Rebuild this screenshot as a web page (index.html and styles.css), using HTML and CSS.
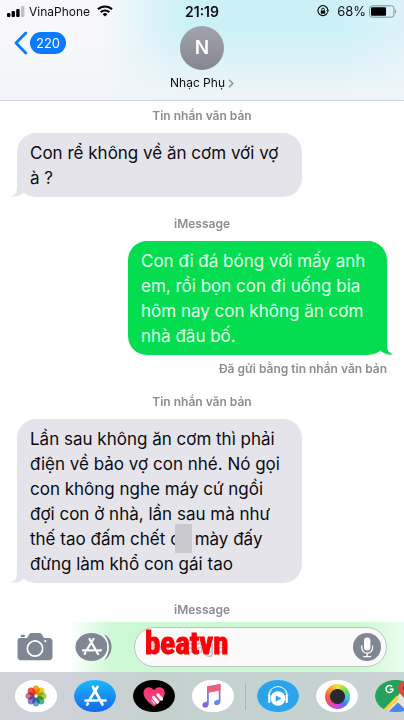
FILE: index.html
```html
<!DOCTYPE html>
<html lang="vi">
<head>
  <meta charset="UTF-8">
  <meta name="viewport" content="width=device-width, initial-scale=1.0">
  <title>Nhạc Phụ</title>
  <link rel="stylesheet" href="styles.css">
</head>
<body>
  <div class="phone">
    <header class="top">
      <div class="status">
        <div class="status-left">
          <svg width="18" height="11" viewBox="0 0 18 11">
            <rect x="0" y="7" width="3.4" height="4" rx="1"/>
            <rect x="4.6" y="5" width="3.4" height="6" rx="1"/>
            <rect x="9.2" y="3" width="3.4" height="8" rx="1"/>
            <rect x="14" y="0" width="3.4" height="11" rx="1" fill="#bfc0c2"/>
          </svg>
          <span>VinaPhone</span>
          <svg class="wifi" width="16" height="12" viewBox="0 0 16 12" fill="none" stroke="#000" stroke-width="2.1">
            <path d="M1 4.3a10 10 0 0 1 14 0"/>
            <path d="M3.7 7.2a6.2 6.2 0 0 1 8.6 0"/>
            <path d="M8 11.6L5.6 9.2a3.4 3.4 0 0 1 4.8 0z" fill="#000" stroke="none"/>
          </svg>
        </div>
        <time class="clock">21:19</time>
        <div class="status-right">
          <svg class="lock" width="12" height="12" viewBox="0 0 12 12" fill="none" stroke="#000">
            <path d="M10.6 7.4A5 5 0 1 1 10.9 5" stroke-width="1.1"/>
            <path d="M9.2 5.2h3L10.8 7.3z" fill="#000" stroke="none"/>
            <rect x="3.8" y="5.4" width="4.4" height="3.3" rx=".5" fill="#000" stroke="none"/>
            <path d="M4.7 5.6V4.4a1.3 1.3 0 0 1 2.6 0v1.2" stroke-width=".9"/>
          </svg>
          <span class="percent">68%</span>
          <svg width="28" height="13" viewBox="0 0 28 13">
            <rect x=".6" y=".8" width="24.4" height="11.4" rx="2.6" fill="none" stroke="#8b8f92"/>
            <rect x="2" y="2.3" width="15" height="8.4" rx="1"/>
            <path d="M26.2 4.5v4c1.4-.5 1.4-3.5 0-4z" fill="#8b8f92"/>
          </svg>
        </div>
      </div>
      <nav class="nav">
        <a class="back" href="#">
          <svg width="14" height="24" viewBox="0 0 14 24" fill="none" stroke="#0a7aff" stroke-width="2.8" stroke-linecap="round" stroke-linejoin="round">
            <path d="M11.8 2L2 12l9.800 10"/>
          </svg>
          <span class="unread">220</span>
        </a>
        <a class="contact" href="#">
          <span class="avatar">N</span>
          <span class="name">Nhạc Phụ
            <svg width="6" height="9" viewBox="0 0 6 9" fill="none" stroke="#7f8a90" stroke-width="1.2"><path d="M1 .8l3.800 3.700L1 8.200"/></svg>
          </span>
        </a>
      </nav>
    </header>

    <main class="messages">
      <p class="label">Tin nhắn văn bản</p>
      <div class="bubble received">
        Con rể không về ăn cơm với vợ à ?
        <svg class="tail" width="16" height="22" viewBox="0 0 16 22"><path d="M6 0v13c0 4-2 7-6 8.500 4 .5 8-.5 11-2.500L16 14z"/></svg>
      </div>
      <p class="label">iMessage</p>
      <div class="bubble sent">
        Con đi đá bóng với mấy anh em, rồi bọn con đi uống bia hôm nay con không ăn cơm nhà đâu bố.
        <svg class="tail" width="16" height="22" viewBox="0 0 16 22"><path d="M10 0v13c0 4 2 7 6 8.500-4 .5-8-.5-11-2.500L0 14z"/></svg>
      </div>
      <p class="sent-note">Đã gửi bằng tin nhắn văn bản</p>
      <p class="label">Tin nhắn văn bản</p>
      <div class="bubble received">
        Lần sau không ăn cơm thì phải điện về bảo vợ con nhé. Nó gọi con không nghe máy cứ ngồi đợi con ở nhà, lần sau mà như thế tao đấm chết <span class="masked">cụ</span> mày đấy đừng làm khổ con gái tao
        <svg class="tail" width="16" height="22" viewBox="0 0 16 22"><path d="M6 0v13c0 4-2 7-6 8.500 4 .5 8-.5 11-2.500L16 14z"/></svg>
      </div>
      <p class="label">iMessage</p>
    </main>

    <form class="compose">
      <button type="button" class="tool" aria-label="Camera">
        <svg width="36" height="28" viewBox="0 0 36 28">
          <path fill="#7f8794" d="M3 5h7l2-3.200C12.600.6 13.300 0 14.500 0h8c1.200 0 1.900.6 2.500 1.800L27 5h5c2.200 0 3.500 1.300 3.500 3.500v15.500c0 2-1.300 3.200-3.500 3.200H4c-2.200 0-3.500-1.200-3.500-3.200V8C.5 6.200 1.500 5 3 5z"/>
          <rect x="3.500" y="1.800" width="4.500" height="2.200" rx="1" fill="#7f8794"/>
          <circle cx="18" cy="15.500" r="7.700" fill="none" stroke="#fff" stroke-width="1.700"/>
          <circle cx="28.300" cy="8.200" r="1.100" fill="#fff"/>
        </svg>
      </button>
      <button type="button" class="tool" aria-label="App Store">
        <svg width="37" height="28" viewBox="0 0 37 28">
          <path d="M29 1.500c9.500 3 10.500 20.500 0 25.500 6.500-7 6.500-18 0-25.500z" fill="#7f8794"/>
          <ellipse cx="16.500" cy="14" rx="16" ry="14" fill="#7f8794"/>
          <path d="M27 1c8 6 8 20 0 26" fill="none" stroke="#fff" stroke-width="1.200"/>
          <g fill="none" stroke="#fff" stroke-width="2.300" stroke-linecap="round">
            <path d="M14.500 6l8.500 15M18.500 6L12 16.500M8 17.300h10.500M23 17.300h3M10.300 19.800l-.6 1"/>
          </g>
        </svg>
      </button>
      <div class="field">
        <input type="text" placeholder="iMessage" aria-label="iMessage">
        <button type="button" class="mic" aria-label="Ghi âm">
          <svg width="28" height="28" viewBox="0 0 28 28">
            <circle cx="14" cy="14" r="14" fill="#7f8794"/>
            <rect x="11" y="4.500" width="6.400" height="13" rx="3.200" fill="#fff"/>
            <path d="M8.800 12.500v2.300a5.400 5.400 0 0 0 10.800 0v-2.300M14.200 20.200v3.300M10.300 23.700h7.800" fill="none" stroke="#fff" stroke-width="1.300"/>
          </svg>
        </button>
        <span class="watermark">beatvn</span>
      </div>
    </form>

    <footer class="apps">
      <button class="app" aria-label="Photos">
        <svg viewBox="0 0 42 32">
          <rect width="42" height="32" fill="#fff"/>
          <g transform="translate(21 16)" class="petals">
            <ellipse cy="-6" rx="3.700" ry="4.600" fill="#fb9c1b"/>
            <ellipse cy="-6" rx="3.700" ry="4.600" fill="#e8cf1d" transform="rotate(45)"/>
            <ellipse cy="-6" rx="3.700" ry="4.600" fill="#a4c93c" transform="rotate(90)"/>
            <ellipse cy="-6" rx="3.700" ry="4.600" fill="#4cb385" transform="rotate(135)"/>
            <ellipse cy="-6" rx="3.700" ry="4.600" fill="#6a9fd8" transform="rotate(180)"/>
            <ellipse cy="-6" rx="3.700" ry="4.600" fill="#8a7fc4" transform="rotate(225)"/>
            <ellipse cy="-6" rx="3.700" ry="4.600" fill="#c8709f" transform="rotate(270)"/>
            <ellipse cy="-6" rx="3.700" ry="4.600" fill="#f0584a" transform="rotate(315)"/>
          </g>
        </svg>
      </button>
      <button class="app" aria-label="App Store">
        <svg viewBox="0 0 42 32">
          <defs><linearGradient id="store" x2="0" y2="1"><stop stop-color="#1cb8f8"/><stop offset="1" stop-color="#1468ee"/></linearGradient></defs>
          <rect width="42" height="32" fill="url(#store)"/>
          <path d="M19 7l9.500 17.500M23.500 7L15.500 20M11.500 20.500h12M28.500 20.500h3M13.800 23.500l-.6 1" fill="none" stroke="#fff" stroke-width="2.700" stroke-linecap="round"/>
        </svg>
      </button>
      <button class="app" aria-label="Digital Touch">
        <svg viewBox="0 0 42 32">
          <defs><linearGradient id="heart" x2="0" y2="1"><stop stop-color="#fb2f68"/><stop offset="1" stop-color="#f0508a"/></linearGradient></defs>
          <rect width="42" height="32"/>
          <path d="M21 26.500C15 22 10.500 18 10.500 12.800c0-6 7.500-7.800 10.500-2.600 3-5.200 10.800-3.400 10.800 2.600 0 5.200-4.800 9.200-10.800 13.700z" fill="url(#heart)"/>
          <path d="M20.500 17.500l4 4.500M25 15l3.500 4" stroke="#fff" stroke-width="3.200" stroke-linecap="round"/>
          <path d="M18.500 20l3.500 4" stroke="#fbb6cc" stroke-width="1.300"/>
        </svg>
      </button>
      <button class="app" aria-label="Music">
        <svg viewBox="0 0 42 32">
          <defs><linearGradient id="music" x1="1" y1="0" x2="0" y2="1"><stop stop-color="#f4506c"/><stop offset=".45" stop-color="#5b8df0"/><stop offset=".7" stop-color="#7b7df0"/><stop offset="1" stop-color="#8a4be0"/></linearGradient></defs>
          <rect width="42" height="32" fill="#fff"/>
          <path d="M15 6.500L28.500 4v17.500c0 4-6.500 5-6.500 1.500 0-2.700 3-3 4.800-3.600V10.500l-10 2V24c0 4.500-6.300 4.800-6.300 1.300 0-2.800 2.700-3.100 4.500-3.700z" fill="url(#music)"/>
          <path d="M15 6.500L28.500 4v6.200L15 12.900z" fill="#ec5f7e"/>
        </svg>
      </button>
      <span class="divider"></span>
      <button class="app" aria-label="Zing MP3">
        <svg viewBox="0 0 42 32">
          <rect width="42" height="32" fill="#2aa4ea"/>
          <path d="M12.500 14.500C13.500 4 28.500 4 29.500 14.500" fill="none" stroke="#fff" stroke-width="1"/>
          <path d="M11 16c1-4 2-6 4-7.500M31 16c-1-4-2-6-4-7.500" fill="none" stroke="#fff" stroke-width=".7"/>
          <rect x="11.200" y="14.500" width="2.200" height="8.500" rx="1" fill="#fff"/>
          <rect x="28.600" y="14.500" width="2.200" height="8.500" rx="1" fill="#fff"/>
          <circle cx="21" cy="18.500" r="7.300" fill="#fff"/>
          <path d="M18.700 15.200v6.600l5.600-3.300z" fill="#2aa4ea"/>
        </svg>
      </button>
      <button class="app" aria-label="Color">
        <span class="wheel"></span>
      </button>
      <button class="app" aria-label="Google Maps">
        <svg viewBox="0 0 42 32">
          <rect width="42" height="32" fill="#23a25b"/>
          <path d="M7 32L24 14.500 42 32z" fill="#e9e6e0"/>
          <path d="M6 32L22 15.500l3 2.500L11 32z" fill="#f7cf48"/>
          <path d="M13 32l10-9.500L33 32z" fill="#4a86ea"/>
          <path d="M24 14l18-12v30h-5L23 18z" fill="#e9e6e0"/>
          <path d="M30.500 22c0-5-7.500-8-7.500-14C23 4 26.500 1 30.500 1S38 4 38 8c0 6-7.500 9-7.500 14z" fill="#dd4b3e"/>
          <circle cx="30.500" cy="8" r="2.600" fill="#80261f"/>
          <path d="M17.200 6.800a3.500 3.500 0 1 0 .8 2.500h-3.400" fill="none" stroke="#fff" stroke-width="1.500"/>
        </svg>
      </button>
    </footer>
  </div>
</body>
</html>
```
FILE: styles.css
```css
* {
  box-sizing: border-box;
}

body {
  margin: 0;
  font-family: Inter, "Noto Sans", sans-serif;
  color: #0c0c12;
  background: #fff;
}

a {
  color: inherit;
  text-decoration: none;
}

button {
  padding: 0;
  border: none;
  background: none;
  font: inherit;
  cursor: pointer;
}

svg {
  display: block;
}

p {
  margin: 0;
}

.phone {
  display: flex;
  flex-direction: column;
  min-height: 100vh;
  overflow: hidden;
}

/* header */
.top {
  border-bottom: 1px solid #d3d7da;
  background:
    linear-gradient(to bottom, rgba(247, 248, 250, 0) 30%, #f1f5f9 100%),
    linear-gradient(to right, #f8f8fa 25%, #cbf1f7 46%, #cbf1f7 84%, #dcf3f8 100%);
}

.status {
  display: grid;
  grid-template-columns: 1fr auto 1fr;
  align-items: center;
  height: 22px;
  padding: 0 7px;
  font-size: 12px;
}

.status-left,
.status-right {
  display: flex;
  align-items: center;
  gap: 4px;
}

.status-right {
  justify-content: flex-end;
  gap: 3px;
}

.wifi {
  margin-left: 3px;
}

.lock {
  margin-right: 5px;
}

.percent {
  font-size: 13px;
}

.clock {
  font-size: 14px;
  font-weight: 600;
}

.nav {
  display: grid;
  grid-template-columns: 1fr auto 1fr;
  align-items: start;
  padding: 4px 14px 8px;
}

.back {
  display: flex;
  align-items: center;
  gap: 2px;
  padding-top: 5px;
}

.unread {
  padding: 0 6px;
  border-radius: 11px;
  background: #0a7aff;
  color: #fff;
  font-size: 13px;
  line-height: 22px;
}

.contact {
  display: flex;
  flex-direction: column;
  align-items: center;
  gap: 4px;
}

.avatar {
  width: 44px;
  border-radius: 50%;
  background: linear-gradient(#a2a3ad, #858690);
  color: #fff;
  font-size: 19px;
  font-weight: 600;
  line-height: 44px;
  text-align: center;
}

.name {
  display: flex;
  align-items: center;
  gap: 3px;
  font-size: 12px;
  line-height: 18px;
}

/* conversation */
.messages {
  display: flex;
  flex: 1;
  flex-direction: column;
  align-items: flex-start;
  padding: 6px 17px 3px;
}

.label,
.sent-note {
  color: #8c8c92;
  font-size: 12px;
  font-weight: 600;
  line-height: 18px;
}

.label {
  align-self: center;
}

.sent-note {
  align-self: flex-end;
  margin: 5px 0 15px;
}

.bubble {
  position: relative;
  padding: 8px 13px 6px;
  border-radius: 19px;
  font-size: 17px;
  line-height: 25px;
}

.received {
  max-width: 77%;
  margin: 8px 0 18px;
  background: #e5e4ea;
}

.sent {
  align-self: flex-end;
  max-width: 70%;
  margin-top: 8px;
  background: #04dd50;
  color: #e4ffe9;
}

.tail {
  position: absolute;
  bottom: 0;
}

.received .tail {
  left: -6px;
  fill: #e5e4ea;
}

.sent .tail {
  right: -6px;
  fill: #04dd50;
}

.masked {
  position: relative;
}

.masked::after {
  content: "";
  position: absolute;
  top: -5px;
  right: -2px;
  width: 17px;
  height: 29px;
  background: #c8c8cd;
}

/* message box */
.compose {
  display: flex;
  align-items: center;
  gap: 22px;
  padding: 5px 17px;
  background: linear-gradient(to right, #fff 17%, #ccf9d4 28%, #ccf9d4 88%, #e9fdee 100%);
}

.field {
  position: relative;
  display: flex;
  flex: 1;
  align-items: center;
  min-width: 0;
  height: 40px;
  padding: 0 5px 0 12px;
  border: 1px solid #bcc4bf;
  border-radius: 20px;
  background: #fafafa;
}

.field input {
  flex: 1;
  min-width: 0;
  padding: 0;
  border: none;
  outline: none;
  background: none;
  font: inherit;
  font-size: 17px;
}

.field input::placeholder {
  color: #c3c3c7;
}

.watermark {
  position: absolute;
  top: -4px;
  left: 10px;
  color: #fb0007;
  font-family: Impact, "Roboto Condensed", "Open Sans Condensed", "Liberation Sans", sans-serif;
  font-size: 31px;
  font-weight: bold;
  line-height: 40px;
  -webkit-text-stroke: 1px #fb0007;
  pointer-events: none;
}

/* app strip */
.apps {
  display: flex;
  align-items: center;
  gap: 17px;
  height: 48px;
  padding-left: 15px;
  overflow: hidden;
  background: linear-gradient(to right, #d0d2d9 15%, #c4d2cf 40%, #c6d2d0 80%, #cdd3d5);
}

.app {
  flex: none;
  width: 42px;
  height: 32px;
  border-radius: 20px / 16px;
  background: #fff;
  overflow: hidden;
}

.petals ellipse {
  mix-blend-mode: multiply;
}

.divider {
  flex: none;
  width: 1px;
  height: 27px;
  margin: 0 -6px;
  background: #a9b4b4;
}

.wheel {
  display: block;
  width: 25px;
  height: 25px;
  margin: 0 auto;
  border-radius: 50%;
  background:
    radial-gradient(circle, #2b2930 0 7px, transparent 8px),
    conic-gradient(#f3e33a, #7fdc4b, #38c6e8 100deg, #5a6bf0 140deg, #c04be8 180deg, #f0468c 225deg, #fb5a3c 270deg, #fba52f 320deg, #f3e33a);
}
```
